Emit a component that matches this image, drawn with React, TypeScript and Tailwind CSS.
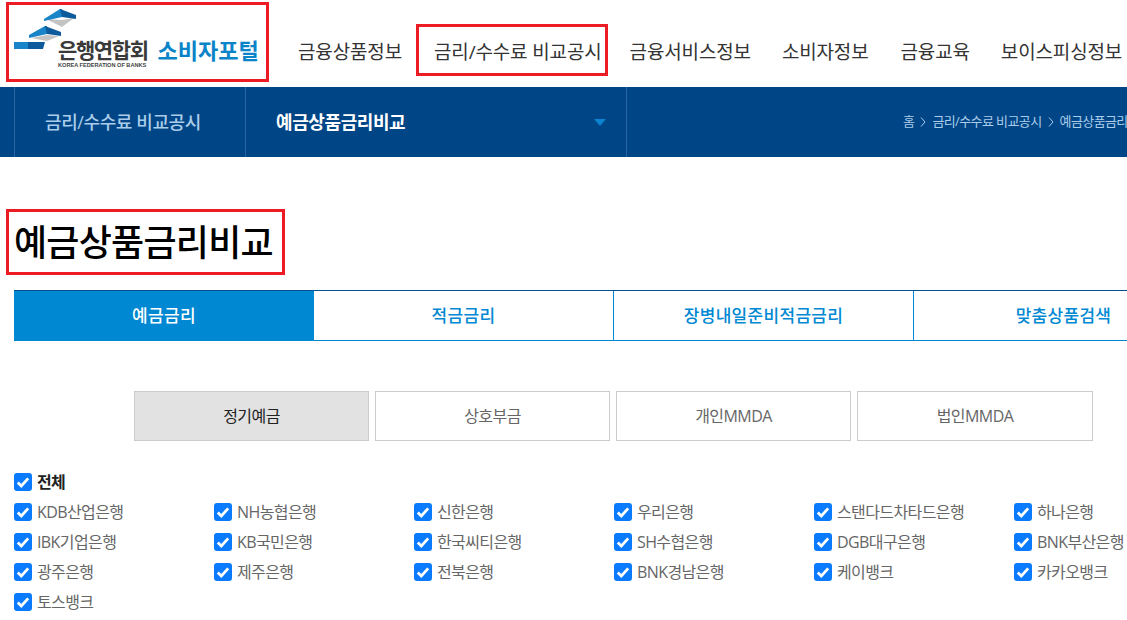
const font = { fontFamily: '"Open Sans", "Noto Sans CJK KR", "Noto Sans", sans-serif' };

const nav = ["금융상품정보", "금리/수수료 비교공시", "금융서비스정보", "소비자정보", "금융교육", "보이스피싱정보"];
const navGaps = ["ml-0", "ml-[32px]", "ml-[28px]", "ml-[31px]", "ml-[32px]", "ml-[31px]"];
const tabs = ["예금금리", "적금금리", "장병내일준비적금금리", "맞춤상품검색"];
const subs = ["정기예금", "상호부금", "개인MMDA", "법인MMDA"];
const banks = [
  "KDB산업은행", "NH농협은행", "신한은행", "우리은행", "스탠다드차타드은행", "하나은행",
  "IBK기업은행", "KB국민은행", "한국씨티은행", "SH수협은행", "DGB대구은행", "BNK부산은행",
  "광주은행", "제주은행", "전북은행", "BNK경남은행", "케이뱅크", "카카오뱅크",
  "토스뱅크",
];

function Check({ label, bold }: { label: string; bold?: boolean }) {
  return (
    <div className="flex h-[30px] items-center">
      <span className="flex h-[18px] w-[18px] shrink-0 items-center justify-center rounded-[3px] bg-[#0a7bff]">
        <svg width="16" height="16" viewBox="0 0 16 16" fill="none">
          <path d="M2.8 8.4 6.3 11.9 13.2 4.4" stroke="#fff" strokeWidth="2.8" />
        </svg>
      </span>
      <span className={`ml-[5px] whitespace-nowrap text-[16px] tracking-[-0.6px] ${bold ? "font-bold text-[#222]" : "text-[#666]"}`}>
        {label}
      </span>
    </div>
  );
}

function Logo() {
  return (
    <div className="flex h-[87px] w-[284px] shrink-0 pl-[14px] pt-[9px]">
      <div className="relative h-[60px] w-[42px] shrink-0">
        <svg width="64" height="42" viewBox="0 0 64 42" className="absolute left-0 top-0">
          <path d="M32 10 48 11 60 9 48 18Z" fill="#c4c4c4" />
          <path d="M30 10 46 0 48 0 48 8 30 12Z" fill="#1a84c8" />
          <path d="M46 0 62 6 62 10 48 8Z" fill="#0d5a9c" />
          <path d="M15 26 31 17 33 17 33 25 15 29Z" fill="#1a84c8" />
          <path d="M31 17 47 23 47 27 33 25Z" fill="#0d5a9c" />
          <path d="M17 29 33 26 45 27 33 32Z" fill="#c4c4c4" />
          <path d="M0 33H16V40H0Z" fill="#1a84c8" />
          <path d="M14 33H31L29 40H14Z" fill="#0d5a9c" />
        </svg>
      </div>
      <div className="ml-[2px] mt-[29px] flex flex-col items-start">
        <span className="text-[21px] font-bold leading-[24px] tracking-[-1.4px] text-[#3a3a3a]">은행연합회</span>
        <span className="whitespace-nowrap text-[5.6px] font-bold leading-[7px] text-[#444]" style={{ fontFamily: '"Liberation Sans", sans-serif' }}>
          KOREA FEDERATION OF BANKS
        </span>
      </div>
      <span className="ml-[10px] mt-[27px] whitespace-nowrap text-[22px] font-bold leading-[28px] tracking-[0px] text-[#0a84c9]">소비자포털</span>
    </div>
  );
}

export default function App() {
  return (
    <div className="relative h-[620px] w-[1127px] overflow-hidden bg-white" style={font}>
      <header className="flex h-[87px]">
        <Logo />
        <nav className="ml-[14px] flex items-start pt-[38px]">
          {nav.map((n, i) => (
            <span key={n} className={`${navGaps[i]} whitespace-nowrap text-[19px] font-normal leading-[28px] tracking-[-0.15px] text-[#333]`}>
              {n}
            </span>
          ))}
        </nav>
      </header>

      <div className="flex h-[70px] w-[1300px] items-center bg-[#004585] pl-[14px]">
        <div className="flex h-full w-[232px] items-center border-x border-[#2b64a0] pl-[30px] text-[18px] font-medium tracking-[-0.4px] text-[#a9cdea]">
          금리/수수료 비교공시
        </div>
        <div className="flex h-full w-[381px] items-center justify-between border-r border-[#2b64a0] pl-[30px] pr-[20px] text-[18px] font-bold tracking-[-0.4px] text-white">
          예금상품금리비교
          <span className="h-0 w-0 border-x-[6px] border-t-[7px] border-x-transparent border-t-[#0a84d0]" />
        </div>
        <div className="ml-[276px] flex items-center whitespace-nowrap text-[13px] tracking-[-0.6px] text-[#a9cdea]">
          <span>홈</span>
          <svg width="6" height="10" viewBox="0 0 6 10" fill="none" className="mx-[6px]"><path d="M1 0.5 5 5 1 9.5" stroke="#a9cdea" /></svg>
          <span>금리/수수료 비교공시</span>
          <svg width="6" height="10" viewBox="0 0 6 10" fill="none" className="mx-[6px]"><path d="M1 0.5 5 5 1 9.5" stroke="#a9cdea" /></svg>
          <span>예금상품금리비교</span>
        </div>
      </div>

      <h1 className="ml-[14px] mt-[58px] h-[75px] text-[36px] font-medium leading-[55px] tracking-[-0.75px] text-black">예금상품금리비교</h1>

      <div className="ml-[14px] flex h-[51px] w-[1200px] border-b border-t border-b-[#0088d2] border-t-[#004f91]">
        {tabs.map((t, i) => (
          <div
            key={t}
            className={`flex w-[300px] items-center justify-center text-[17px] font-medium tracking-[0.3px] ${i === 0 ? "bg-[#0088d2] text-white" : "border-r border-[#0088d2] text-[#0088d2]"}`}
          >
            {t}
          </div>
        ))}
      </div>

      <div className="ml-[134px] mt-[50px] flex gap-[6px]">
        {subs.map((s, i) => (
          <div
            key={s}
            className={`flex h-[50px] items-center justify-center border border-[#ccc] text-[16px] tracking-[-0.55px] ${i === 0 ? "bg-[#e2e2e2] text-[#222]" : "text-[#666]"} ${i === 3 ? "w-[236px]" : "w-[235px]"}`}
          >
            {s}
          </div>
        ))}
      </div>

      <div className="ml-[14px] mt-[26px] flex flex-col">
        <Check label="전체" bold />
        <div className="grid grid-cols-[repeat(6,200px)]">
          {banks.map((b) => (
            <Check key={b} label={b} />
          ))}
        </div>
      </div>

      <div className="absolute left-[6px] top-[2px] h-[80px] w-[263px] border-[3px] border-[#ed1c24]" />
      <div className="absolute left-[416px] top-[24px] h-[52px] w-[192px] border-[3px] border-[#ed1c24]" />
      <div className="absolute left-[6px] top-[209px] h-[66px] w-[279px] border-[3px] border-[#ed1c24]" />
    </div>
  );
}
